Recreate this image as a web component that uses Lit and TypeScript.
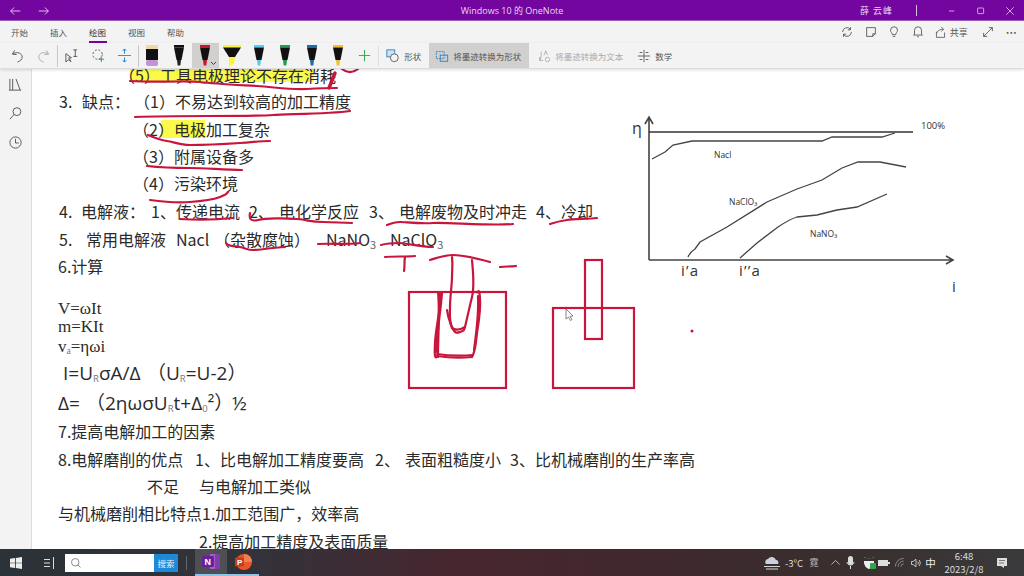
import { LitElement, html, css, svg } from "lit";
import { customElement } from "lit/decorators.js";

const INK = "#c9153c";

type Line = { x: number; y: number; t: unknown; cls?: string };

const LINES: Line[] = [
  { x: 119, y: 76, t: "（5）工具电极理论不存在消耗" },
  { x: 59, y: 102, t: "3." },
  { x: 82, y: 102, t: "缺点：" },
  { x: 134, y: 102, t: "（1）不易达到较高的加工精度" },
  { x: 133, y: 130, t: "（2）电极加工复杂" },
  { x: 133, y: 157, t: "（3）附属设备多" },
  { x: 133, y: 184, t: "（4）污染环境" },
  { x: 59, y: 212, t: "4." },
  { x: 81, y: 212, t: "电解液：" },
  { x: 151, y: 212, t: "1、传递电流" },
  { x: 249, y: 212, t: "2、" },
  { x: 279, y: 212, t: "电化学反应" },
  { x: 369, y: 212, t: "3、" },
  { x: 399, y: 212, t: "电解废物及时冲走" },
  { x: 536, y: 212, t: "4、冷却" },
  { x: 59, y: 240, t: "5." },
  { x: 86, y: 240, t: "常用电解液" },
  { x: 176, y: 240, t: "Nacl" },
  { x: 214, y: 240, t: "（杂散腐蚀）" },
  { x: 326, y: 240, t: html`NaNO<sub>3</sub>` },
  { x: 390, y: 240, t: html`NaClO<sub>3</sub>` },
  { x: 58, y: 267, t: "6.计算" },
  { x: 58, y: 309, t: "V=ωIt", cls: "serif" },
  { x: 58, y: 327, t: "m=KIt", cls: "serif" },
  { x: 58, y: 347, t: html`v<sub class="low">a</sub>=ηωi`, cls: "serif" },
  { x: 63, y: 373, t: html`I=U<sub class="low">R</sub>σA/Δ`, cls: "big" },
  { x: 147, y: 373, t: html`（U<sub class="low">R</sub>=U-2）`, cls: "big" },
  { x: 58, y: 403, t: "Δ=", cls: "big" },
  { x: 86, y: 403, t: html`（2ηωσU<sub class="low">R</sub>t+Δ<sub class="low">0</sub>²）`, cls: "big" },
  { x: 232, y: 403, t: "½", cls: "big" },
  { x: 58, y: 432, t: "7.提高电解加工的因素" },
  { x: 58, y: 460, t: "8.电解磨削的优点" },
  { x: 195, y: 460, t: "1、比电解加工精度要高" },
  { x: 375, y: 460, t: "2、" },
  { x: 405, y: 460, t: "表面粗糙度小" },
  { x: 510, y: 460, t: "3、比机械磨削的生产率高" },
  { x: 147, y: 487, t: "不足" },
  { x: 199, y: 487, t: "与电解加工类似" },
  { x: 58, y: 514, t: "与机械磨削相比特点1.加工范围广，效率高" },
  { x: 199, y: 542, t: "2.提高加工精度及表面质量" },
];

const INK_PATHS = [
  "M130 81C160 83 185 80 200 82S240 85 257 86S290 90 307 89S330 88 337 88",
  "M135 117C160 116 190 116 207 116S260 116 273 115S330 114 350 111",
  "M148 135C155 138 160 140 167 141S180 145 190 145S225 144 240 143S260 141 270 141",
  "M147 166C165 168 175 168 190 168S225 170 242 170",
  "M150 200C165 202 175 203 190 202S212 200 220 197S226 194 228 192",
  "M180 219C195 220 215 220 233 218",
  "M250 213C249 218 250 222 258 220S285 218 297 219S310 222 323 222S340 223 352 223",
  "M226 243C228 247 235 246 240 247S248 250 253 250S270 248 285 247",
  "M318 244C330 243 345 245 360 243",
  "M381 245C388 243 393 243 400 243S420 247 433 247",
  "M387 225C392 223 395 222 400 222S420 224 433 223S490 226 513 224",
  "M550 224C556 222 560 221 567 220S588 219 597 218",
  "M385 257C395 256 405 257 415 256",
  "M405 257C404 262 405 266 404 271",
  "M430 260C440 257 445 255 453 255S475 258 490 262",
  "M500 267C505 266 510 267 516 266",
  "M452 257C453 265 452 270 452 277S450 298 450 307S449 320 452 327S457 333 460 332S464 331 465 327S470 305 472 297S473 270 472 260",
  "M447 310C448 318 450 322 452 328",
  "M452 328C456 331 460 330 465 327",
  "M440 292C441 310 436 325 435 343S436 357 437 357",
  "M438 292C440 310 438 335 438 357",
  "M442 292C441 310 437 330 436 352",
  "M437 356C450 358 460 358 472 357",
  "M437 354C450 356 460 356 473 355",
  "M472 357C476 350 476 340 477 333S481 310 480 298S478 294 477 292",
  "M474 350C476 335 479 315 478 296",
  "M342 69C347 73 353 73 358 69",
];

const chartLines = [
  "M652 159L665 152L673 145L692 141L822 141L832 137L882 137L895 133",
  "M688 257Q690 252 695 249L700 242L727 227L767 202L797 189L822 180L842 168L858 162L880 162L906 167",
  "M740 258L757 243L778 227Q790 219 797 217L817 215L837 210L857 207L887 194",
];

const ic = (body: unknown, size = 16) => html`<svg class="ic" width=${size} height=${size} viewBox="0 0 16 16" fill="none" stroke="currentColor" stroke-width="1">${body}</svg>`;

function pen(top: string, body: string, tip: string, wide = false) {
  return html`<svg width="22" height="22" viewBox="0 0 22 22">
    <rect x=${wide ? 2 : 6} y="0" width=${wide ? 18 : 10} height="2.5" fill=${top}></rect>
    <path d=${wide ? "M2 2.5H20L14 12H8Z" : "M6 2.5H16L13.5 15H8.5Z"} fill=${body}></path>
    <path d=${wide ? "M8 12H14L13 19L8 21Z" : "M9 15H13L12.3 20.5H9.7Z"} fill=${tip}></path>
  </svg>`;
}

@customElement("app-root")
export class AppRoot extends LitElement {
  static styles = css`
    :host { display: flex; flex-direction: column; width: 1024px; height: 576px; overflow: hidden; font-family: "Noto Sans CJK SC", "Noto Sans", sans-serif; background: #fff; color: #222; }
    .title { height: 21px; flex: none; box-sizing: border-box; background: #73069f; color: #e8d8f0; display: flex; align-items: center; font-size: 9px; border-bottom: 1px solid #9a5fb8; padding-top: 1px; }
    .title .nav { display: flex; width: 92px; flex: none; }
    .title .nav span { width: 29px; display: flex; justify-content: center; }
    .title .name { flex: none; text-align: center; width: 200px; margin-left: 320px; font-family: "Open Sans", "Noto Sans CJK SC", sans-serif; }
    .title .user { margin-left: 248px; width: 56px; letter-spacing: 1px; flex: none; }
    .title .vsep { width: 1px; height: 11px; background: #d8c0e4; margin-right: 20px; flex: none; }
    .title .win { width: 29px; display: flex; justify-content: center; flex: none; }
    .tabs { height: 22px; flex: none; background: #f3f3f3; display: flex; align-items: center; font-size: 8.5px; color: #444; padding-left: 11px; }
    .tab { width: 39px; height: 22px; line-height: 22px; position: relative; color: #555; }
    .tab.on { color: #333; }
    .tab.on::after { content: ""; position: absolute; left: 0; top: 20px; width: 18px; height: 2px; background: #73069f; }
    .tabs .right { margin-left: auto; display: flex; align-items: center; color: #555; padding-right: 1px; }
    .tabs .right .c { width: 23.6px; display: flex; justify-content: center; }
    .tabs .right .c.sh { width: 13px; margin: 0 2.5px 0 4.7px; }
    .tabs .share { font-size: 9px; margin-right: 8px; }
    .dots { font-weight: 700; font-size: 11px; }
    .tools { height: 26px; box-sizing: border-box; flex: none; background: #f3f3f3; display: flex; align-items: center; font-size: 8.5px; color: #555; border-bottom: 1px solid #dcdcdc; box-shadow: 0 1px 3px #0002; position: relative; z-index: 3; padding-left: 4px; }
    .t { width: 26.6px; height: 25px; display: flex; align-items: center; justify-content: center; flex: none; position: relative; }
    .t.sel { background: #d2d0ce; }
    .t.off { color: #aaa; }
    .t.add { color: #3fae60; margin-left: -1px; margin-right: 1px; }
    .caret { position: absolute; right: 2px; bottom: 2px; }
    .sep { width: 1px; height: 22px; background: #c8c8c8; flex: none; }
    .sep.soft { height: 20px; background: #ddd; }
    .btn { display: flex; align-items: center; gap: 4px; height: 25px; flex: none; margin-left: 7px; }
    .btn.conv { background: #d2d0ce; width: 100px; padding-left: 6px; box-sizing: border-box; margin-left: 8px; }
    .btn.dis { color: #aaa; margin-left: 8px; }
    .btn.math { margin-left: 14px; }
    .main { flex: 1; display: flex; min-height: 0; }
    .side { width: 32px; flex: none; background: #f3f3f3; border-right: 1px solid #ddd; box-sizing: border-box; display: flex; flex-direction: column; align-items: center; padding-top: 8px; gap: 14px; color: #555; }
    .sheet { flex: 1; position: relative; overflow: hidden; background: #fff; font-size: 16px; line-height: 22px; color: #2a2a2a; }
    .hl { position: absolute; background: #fbf94a; }
    .line { position: absolute; white-space: pre; transform: translateY(-50%); margin-top: -1px; }
    .line sub { font-size: 11px; line-height: 0; vertical-align: -3px; color: #666; }
    .line sub.low { font-size: 9.5px; vertical-align: -2px; color: #777; }
    .line.serif { font-family: "Liberation Serif", serif; font-size: 17px; margin-top: 0; }
    .line.big { font-family: "Open Sans", "Noto Sans CJK SC", sans-serif; font-size: 19px; margin-top: 0; }
    .ink { position: absolute; left: 0; top: 0; }
    .ink text { font-family: "Open Sans", "Noto Sans", sans-serif; fill: #333; }
    .wide { letter-spacing: 1.2px; }
    .task { height: 27px; flex: none; display: flex; align-items: center; color: #eee; font-size: 9.5px; background: linear-gradient(90deg, #2b3238 0%, #33323a 25%, #48262f 45%, #3d2a2e 70%, #39302f 85%, #3a3a3c 100%); position: relative; z-index: 3; }
    .start { width: 32px; display: flex; justify-content: center; }
    .tv { width: 33px; display: flex; justify-content: center; }
    .search { width: 113px; height: 18px; display: flex; background: #fff; color: #666; align-items: center; flex: none; }
    .search .glass { width: 89px; padding-left: 5px; box-sizing: border-box; display: flex; }
    .search .go { width: 24px; height: 18px; line-height: 18px; background: #1c8ad8; color: #e8f4ff; text-align: center; font-size: 8.5px; }
    .tsep { width: 1px; height: 14px; background: #666; margin: 0 8px 0 8px; }
    .app { width: 32px; height: 27px; display: flex; align-items: center; justify-content: center; box-sizing: border-box; border-bottom: 2px solid #8fc4e8; }
    .app.on { background: #4d4f52; }
    .tray { margin-left: auto; display: flex; align-items: center; }
    .cell { display: flex; justify-content: center; align-items: center; }
    .temp { width: 22px; color: #ddd; white-space: nowrap; }
    .g7 { width: 7px; }
    .g4 { width: 4px; }
    .g15 { width: 15px; }
    .clock { width: 54px; text-align: center; line-height: 13px; font-size: 9.5px; color: #ddd; }
    .muted { font-size: 9px; color: #bbb; }
    .zh { font-size: 10.5px; }
  `;

  render() {
    return html`
      ${this.renderTitle()}
      ${this.renderTabs()}
      ${this.renderTools()}
      <div class="main">
        <div class="side">
          ${ic(svg`<path d="M2 2V14M5 2V14M8.5 2L13 14M1 14H14" />`, 15)}
          ${ic(svg`<circle cx="9.5" cy="6" r="4.2"/><path d="M6.5 9L2 14"/>`, 15)}
          ${ic(svg`<circle cx="8" cy="8" r="6"/><path d="M8 4V8.5H11.5"/>`, 15)}
        </div>
        <div class="sheet">
          <div class="hl" style="left:98px;top:0;width:184px;height:13px"></div>
          <div class="hl" style="left:129px;top:51px;width:44px;height:18px"></div>
          ${LINES.map(l => html`<div class="line ${l.cls ?? ""}" style="left:${l.x - 32}px;top:${l.y - 69}px">${l.t}</div>`)}
          ${this.renderInk()}
        </div>
      </div>
      ${this.renderTask()}
    `;
  }

  renderTitle() {
    return html`<div class="title">
      <div class="nav">
        <span>${ic(svg`<path d="M14 8H3M7 4L3 8L7 12"/>`, 14)}</span>
        <span>${ic(svg`<path d="M2 8H13M9 4L13 8L9 12"/>`, 14)}</span>
      </div>
      <div class="name">Windows 10 的 OneNote</div>
      <div class="user">薛 云峰</div>
      <div class="vsep"></div>
      <div class="win">${ic(svg`<path d="M4 8H11"/>`, 12)}</div>
      <div class="win">${ic(svg`<rect x="3.5" y="4" width="8" height="7.5" rx="1"/>`, 12)}</div>
      <div class="win">${ic(svg`<path d="M3 3L13 13M13 3L3 13"/>`, 12)}</div>
    </div>`;
  }

  renderTabs() {
    return html`<div class="tabs">
      <div class="tab">开始</div><div class="tab">插入</div><div class="tab on">绘图</div><div class="tab">视图</div><div class="tab">帮助</div>
      <div class="right">
        <div class="c">${ic(svg`<path d="M3 8A5 5 0 0 1 12 5M13 8A5 5 0 0 1 4 11M12 2.5V5.5H9M4 13.5V10.5H7"/>`, 14)}</div>
        <div class="c">${ic(svg`<path d="M3 3H13V10L10 13H3ZM13 10H10V13"/>`, 14)}</div>
        <div class="c">${ic(svg`<path d="M6 11C6 9 4 8 4 6A4 4 0 0 1 12 6C12 8 10 9 10 11ZM6.5 13H9.5"/>`, 14)}</div>
        <div class="c">${ic(svg`<path d="M4 11V6A4 4 0 0 1 12 6V11M2.5 11.5H13.5M7 13.5H9"/>`, 14)}</div>
        <div class="c sh">${ic(svg`<path d="M3 7V14H13V8M3 9C5 5 8 4 11 4M9 1.5L12 4L9 6.5"/>`, 13)}</div>
        <div class="share">共享</div>
        <div class="c">${ic(svg`<path d="M3 13L13 3M9 3H13V7M3 9V13H7"/>`, 14)}</div>
        <div class="c"><span class="dots">⋯</span></div>
      </div>
    </div>`;
  }

  renderTools() {
    return html`<div class="tools">
      <div class="t">${ic(svg`<path d="M5 2.5L2.5 6.5L7 7M3 6.5C8 3 13 6 13 9.5C13 12 11 14 8 15"/>`, 15)}</div>
      <div class="t off">${ic(svg`<path d="M11 2.5L13.5 6.5L9 7M13 6.5C8 3 3 6 3 9.5C3 12 5 14 8 15"/>`, 15)}</div>
      <div class="sep"></div>
      <div class="t">${ic(svg`<path d="M2 6L2 15L4.5 12.5L7.5 14.5L5 10.5H8Z"/><path d="M10 2H14M12 2V9M10 9H14" />`, 15)}</div>
      <div class="t">${ic(svg`<circle cx="7" cy="7" r="5" stroke-dasharray="2 2"/><path d="M11 9V15M8 12H14" stroke="#2f9e52"/>`, 15)}</div>
      <div class="t">${ic(svg`<path d="M1 8H15" stroke="#777"/><path d="M8 1V6M6 3L8 1L10 3M8 10V15M6 13L8 15L10 13" stroke="#2a7cbf"/>`, 15)}</div>
      <div class="sep"></div>
      <div class="t"><svg width="14" height="22" viewBox="0 0 14 22"><rect x="1" y="0" width="12" height="4" fill="#efd9a8"/><rect x="1" y="4" width="12" height="11" fill="#111"/><rect x="1" y="15" width="12" height="6" rx="2" fill="#c493d6"/></svg></div>
      <div class="t">${pen("#111", "#111", "#222")}</div>
      <div class="t sel">${pen("#c9152c", "#111", "#c9152c")}<svg class="caret" width="7" height="5" viewBox="0 0 7 5" fill="none" stroke="#444"><path d="M1 1L3.5 3.5L6 1"/></svg></div>
      <div class="t">${pen("#f9f33a", "#111", "#f9f33a", true)}</div>
      <div class="t">${pen("#55cdee", "#111", "#55cdee")}</div>
      <div class="t">${pen("#1f9d55", "#111", "#1f9d55")}</div>
      <div class="t">${pen("#1d6aa5", "#111", "#1d6aa5")}</div>
      <div class="t">${pen("#f0c030", "#111", "#f0c030")}</div>
      <div class="t add">${ic(svg`<path d="M8 2V14M2 8H14" stroke-width="1.2"/>`, 15)}</div>
      <div class="sep soft"></div>
      <div class="btn">${ic(svg`<rect x="1" y="1" width="9" height="8" fill="#cfe3f5" stroke="#2a7cbf"/><circle cx="9.5" cy="10" r="4.5" fill="#f3f3f3" stroke="#555"/>`, 14)}<span>形状</span></div>
      <div class="btn conv">${ic(svg`<rect x="1.5" y="3" width="9" height="8" stroke-dasharray="2 1" stroke="#2a7cbf"/><rect x="6" y="7" width="8.5" height="7" stroke="#2a7cbf"/>`, 14)}<span>将墨迹转换为形状</span></div>
      <div class="btn dis">${ic(svg`<path d="M3 9V13L7 13M3 13C6 9 4 6 5 3"/><circle cx="12" cy="12" r="2.5"/><path d="M10 2L8 7M10 2L12 7"/>`, 14)}<span>将墨迹转换为文本</span></div>
      <div class="btn math">${ic(svg`<path d="M1 8H15M8 1V15M3 4H6M10 4H13M3 12H6M10 12H13" />`, 14)}<span>数学</span></div>
    </div>`;
  }

  renderInk() {
    const line = (d: string, w = 2.2) => svg`<path d=${d} fill="none" stroke=${INK} stroke-width=${w} stroke-linecap="round" stroke-linejoin="round"/>`;
    const rect = (x: number, y: number, w: number, h: number) => svg`<rect x=${x} y=${y} width=${w} height=${h} fill="none" stroke=${INK} stroke-width="2.2"/>`;
    return html`<svg class="ink" width="992" height="480" viewBox="32 69 992 480">
      <g fill="none" stroke="#444" stroke-width="1.6">
        <path d="M649 260V118M645 124L649 117L653 124M649 260H952M946 256L953 260L946 264"/>
        <path d="M649 132H913" stroke="#333"/>
        ${chartLines.map(d => svg`<path d=${d} stroke-width="1.3"/>`)}
      </g>
      <text x="632" y="134" font-size="16">η</text>
      <text x="921" y="129" font-size="9.5">100%</text>
      <text x="714" y="158" font-size="8.5">Nacl</text>
      <text x="729" y="205" font-size="8.5">NaClO₃</text>
      <text x="810" y="237" font-size="8.5">NaNO₃</text>
      <text class="wide" x="681" y="276" font-size="15">i’a</text>
      <text class="wide" x="739" y="276" font-size="15">i’’a</text>
      <text x="952" y="292" font-size="15">i</text>
      ${INK_PATHS.map(d => line(d))}
      ${line("M335 73L329 88", 3.5)}
      ${rect(409, 292, 97, 96)}
      ${rect(553, 308, 81, 80)}
      ${rect(585, 260, 17, 79)}
      <circle cx="692" cy="331" r="1.5" fill=${INK}/>
      <path d="M566 309V319L568.500 317L570.500 320.500L572 319.500L570 316.500L573 316Z" fill="#fff" stroke="#555" stroke-width=".7"/>
    </svg>`;
  }

  renderTask() {
    const c = (w: number, body: unknown) => html`<div class="cell" style="width:${w}px">${body}</div>`;
    return html`<div class="task">
      <div class="start"><svg width="12" height="12" viewBox="0 0 12 12" fill="#eee"><path d="M0 1.700L5 1V5.700H0ZM5.800 .9L12 0V5.700H5.800ZM0 6.300H5V11L0 10.300ZM5.800 6.300H12V12L5.800 11.100Z"/></svg></div>
      <div class="tv"><svg width="12" height="12" viewBox="0 0 12 12" fill="none" stroke="#ddd"><path d="M1 2.500H7M1 9.500H7M1 6H7M10.500 0V12"/></svg></div>
      <div class="search">
        <div class="glass">${ic(svg`<circle cx="7" cy="7" r="5"/><path d="M10.500 10.500L14 14"/>`, 12)}</div>
        <div class="go">搜索</div>
      </div>
      <div class="tsep"></div>
      <div class="app on"><svg width="19" height="17" viewBox="0 0 19 17"><rect x="8" y="1" width="10" height="15" fill="#a55ec9"/><rect x="13" y="1" width="5" height="15" fill="#7a3fa8"/><rect x="0" y="3" width="12" height="11" rx="1" fill="#6a1f9a"/><text x="2.500" y="12" font-size="9" font-weight="700" fill="#fff" font-family="Liberation Sans">N</text></svg></div>
      <div class="app"><svg width="18" height="18" viewBox="0 0 18 18"><circle cx="10" cy="9" r="8" fill="#e8562a"/><path d="M10 1A8 8 0 0 1 18 9H10Z" fill="#f08050"/><rect x="1" y="4.500" width="9" height="9" rx="1" fill="#c43e1c"/><text x="3" y="12" font-size="8" font-weight="700" fill="#fff" font-family="Liberation Sans">P</text></svg></div>
      <div class="tray">
        ${c(26, html`<svg width="18" height="16" viewBox="0 0 18 16"><path d="M3 9A3 3 0 0 1 5 4A4.500 4.500 0 0 1 13 5A2.500 2.500 0 0 1 15 9Z" fill="#c8d2de"/><path d="M1 11.500H17M3 14H15" stroke="#d8d8d8"/></svg>`)}
        <div class="temp">-3°C</div>
        ${c(14, html`<span class="muted">霓</span>`)}
        <div class="g7"></div>
        ${c(14, ic(svg`<path d="M2 11L8 5L14 11"/>`, 11))}
        ${c(16, html`<svg width="9" height="13" viewBox="0 0 9 13"><rect x="2" y="0" width="5" height="9" rx="2.500" fill="#ddd"/><path d="M1 6C1 10 8 10 8 6M4.500 10V13" fill="none" stroke="#ddd"/></svg>`)}
        <div class="g4"></div>
        ${c(14, html`<svg width="13" height="13" viewBox="0 0 13 13"><path d="M1 1.500Q6 3 11 1.500V7Q10 12 6 13Q2 12 1 7Z" fill="#eee"/><path d="M1 1.500Q6 3 11 1.500V5H1Z" fill="#333"/><rect x="7" y="7" width="6" height="6" rx="1" fill="#2da44e"/></svg>`)}
        ${c(15, html`<svg width="12" height="8" viewBox="0 0 12 8"><rect x="0" y="1" width="10" height="6" fill="#ddd"/><rect x="10" y="3" width="2" height="2" fill="#ddd"/></svg>`)}
        ${c(17, ic(svg`<path d="M2 14A12 12 0 0 1 14 2M6 14A8 8 0 0 1 14 6M10 14A4 4 0 0 1 14 10" stroke="#aaa"/>`, 11))}
        ${c(16, ic(svg`<path d="M2 6V10H4L8 13V3L4 6ZM10.500 6Q12 8 10.500 10M12.500 4Q15 8 12.500 12"/>`, 12))}
        ${c(13, html`<span class="zh">中</span>`)}
        <div class="clock">6:48<br />2023/2/8</div>
        <div class="g4"></div>
        ${c(14, html`<svg width="12" height="12" viewBox="0 0 12 12"><path d="M1 1H11V9H8V11L5 9H1Z" fill="#ddd"/><path d="M3 3.500H9M3 6H8" stroke="#777"/></svg>`)}
        <div class="g15"></div>
      </div>
    </div>`;
  }
}
